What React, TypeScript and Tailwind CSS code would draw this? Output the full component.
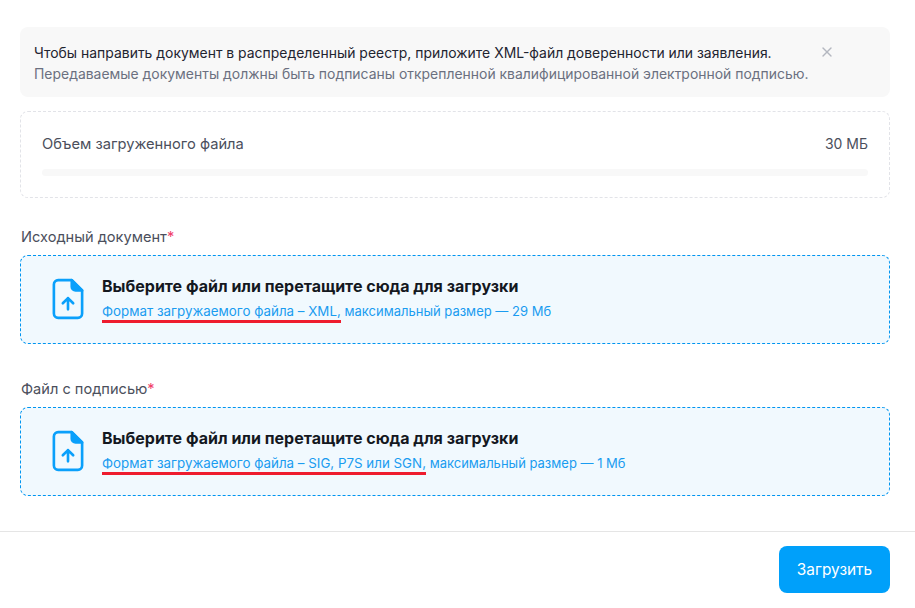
import { X } from 'lucide-react';

const FileIcon = () => (
  <svg className="ml-px -mt-[2px]" width="32" height="42" viewBox="0 0 34 44" fill="none" stroke="#0aa0fb" strokeWidth="2.8" strokeLinecap="round" strokeLinejoin="round">
    <path d="M21 2H6.5A4.5 4.5 0 0 0 2 6.5v31A4.5 4.5 0 0 0 6.5 42h21a4.5 4.5 0 0 0 4.5-4.5V13L21 2Z" />
    <path d="M21 2v7a4 4 0 0 0 4 4h7L21 2Z" fill="#0aa0fb" />
    <path d="M17 33V21M11.5 26.5 17 21l5.5 5.5" />
  </svg>
);

const Upload = ({ label, formats, size }: { label: string; formats: string; size: string }) => (
  <div>
    <div className="text-[14.6px] leading-5 text-[#4b4f5c] pl-px">
      {label}
      <span className="text-[#f0406a]">*</span>
    </div>
    <div className="mt-[8px] flex h-[89px] items-center rounded-lg border border-dashed border-[#0095f0] bg-[#f1f9fe] pl-[30px]">
      <FileIcon />
      <div className="ml-[18px] -mt-[2px]">
        <div className="text-[16px] font-bold leading-5 text-[#14181f]">Выберите файл или перетащите сюда для загрузки</div>
        <div className="mt-[5px] text-[13px] leading-5 text-[#1a9cf0]">
          <span className="border-b-[3px] border-[#ee1c2e] pb-[1px] text-[13.35px]">Формат загружаемого файла – {formats},</span> максимальный размер — {size}
        </div>
      </div>
    </div>
  </div>
);

export default function App() {
  return (
    <div className="flex h-[608px] w-[915px] flex-col bg-white pt-[27px] font-['Inter',sans-serif]">
      <div className="pl-5 pr-[25px]">
        <div className="relative h-[70px] rounded-lg bg-[#f8f8f8] px-[14px] pt-[15px] text-[13.95px] leading-[21px]">
          <div className="text-[#1f2430]">Чтобы направить документ в распределенный реестр, приложите XML-файл доверенности или заявления.</div>
          <div className="text-[#6b7080]">Передаваемые документы должны быть подписаны открепленной квалифицированной электронной подписью.</div>
          <X className="absolute left-[799px] top-[17px] text-[#b4b7c0]" size={16} />
        </div>
        <div className="mt-[14px] h-[87px] rounded-lg border border-dashed border-[#e2e3e8] px-[21px] pt-[22px]">
          <div className="flex justify-between text-[14.7px] leading-5 text-[#4b4f5c]">
            <span>Объем загруженного файла</span>
            <span className="text-[14px]">30 МБ</span>
          </div>
          <div className="mt-[15px] h-[7px] rounded bg-[#f8f8f8]" />
        </div>
        <div className="mt-[29px] flex flex-col gap-[35px]">
          <Upload label="Исходный документ" formats="XML" size="29 Мб" />
          <Upload label="Файл с подписью" formats="SIG, P7S или SGN" size="1 Мб" />
        </div>
      </div>
      <div className="mt-[35px] flex justify-end border-t border-[#e5e5e5] px-[25px] pt-[14px]">
        <button className="h-[47px] w-[111px] rounded-lg bg-[#00a0fa] text-[15.4px] text-white">Загрузить</button>
      </div>
    </div>
  );
}
